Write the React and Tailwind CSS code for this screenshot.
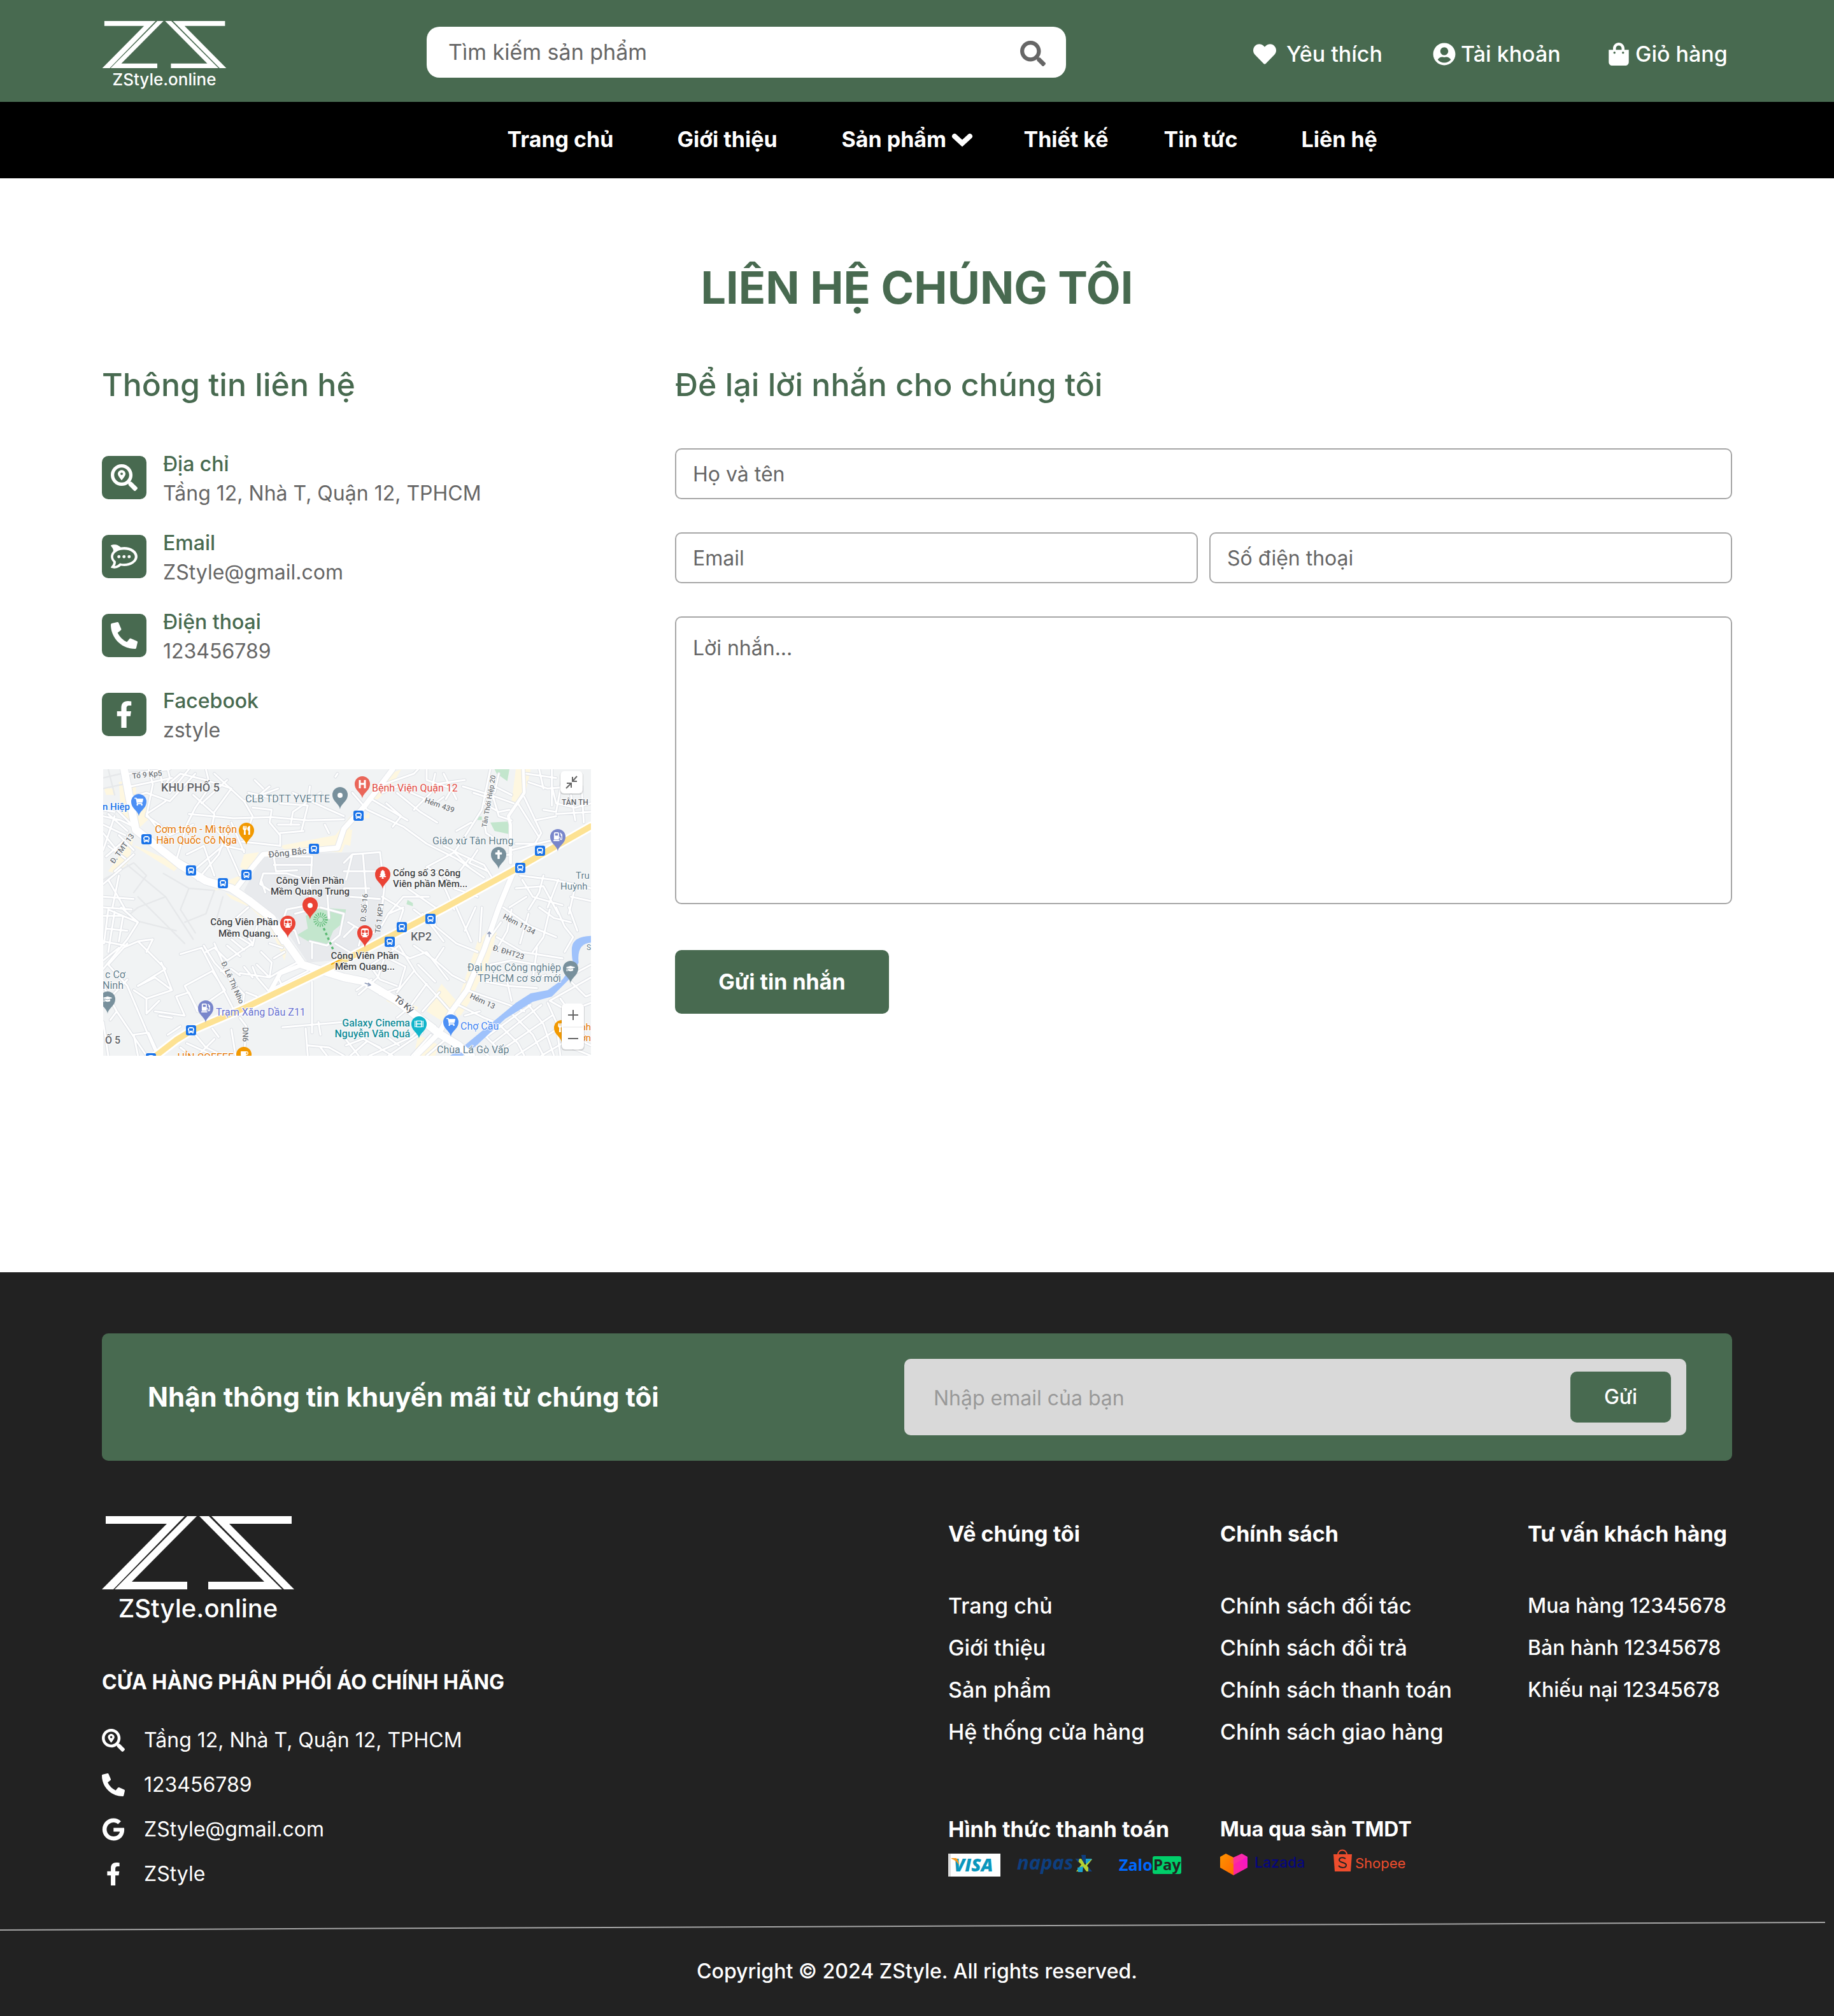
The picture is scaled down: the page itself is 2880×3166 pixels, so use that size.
import React from "react";
import {
  FaSearch,
  FaHeart,
  FaUserCircle,
  FaShoppingBag,
  FaSearchLocation,
  FaRocketchat,
  FaPhoneAlt,
  FaFacebookF,
  FaGoogle,
  FaBus,
  FaSubway,
  FaUtensils,
  FaShoppingCart,
  FaGraduationCap,
  FaGasPump,
  FaTree,
  FaCross,
  FaFilm,
  FaCoffee,
} from "react-icons/fa";

function LogoMark({ className }) {
  return (
    <svg viewBox="0 0 302 115" className={className} fill="white" aria-hidden="true">
      <path d="M6 0H130L18 115H0L102 12H6Z" />
      <path d="M134 0H149L47 103H134V115H20Z" />
      <path d="M153 0H168L283 115H167V103H255Z" />
      <path d="M172 0H298V12H200L302 115H286Z" />
    </svg>
  );
}

/* ---------- Map ---------- */

const BLOCKS = [
  ["#fef7e0", "M36 180L110 100L150 90L165 200L250 220L255 270L190 330L150 290L120 240L110 100Z"],
  ["#fef7e0", "M140 110H190V180H150ZM40 130H90V160H50ZM190 400L400 490L370 520L180 400ZM60 520L180 350L160 470L100 530Z"],
  ["#fef7e0", "M700 440L770 430L720 520L680 500ZM560 590L680 540V600L560 610ZM610 620L800 700V720L640 650ZM870 400L1130 350L1200 260V330L1160 430L900 425Z"],
  ["#fef7e0", "M1390 60L1440 39L1400 110L1330 180L1300 180ZM1170 350L1210 320L1200 400L1160 390ZM1980 39H2050L2030 130L2000 200L1960 190ZM1260 270L1290 240V270Z"],
  ["#fef7e0", "M730 690H780L830 760L900 900L890 940L860 870L820 780ZM1800 850L1860 790L1890 810L1850 950L1760 1140L1720 1200L1690 1180Z"],
  ["#fef7e0", "M1630 1050L1700 1130L1640 1230L1560 1180L1590 1120ZM1380 1100L1520 1160L1500 1200L1370 1130ZM1520 1290L1620 1340L1600 1389H1500ZM1700 1180L1720 1160L1700 1240Z"],
  ["#e8eaed", "M790 445L1340 425L1365 640L1340 850L1180 935L1000 950L860 740L720 650L700 610Z"],
  ["#c3e6cd", "M990 730L1060 690L1180 700L1170 760L1120 800L1090 870L1020 860L950 820L1000 790ZM1880 39H1950L1940 95L1890 60ZM1860 290L1950 285L1950 345L1880 330ZM1800 262H1820V278H1800ZM1470 655L1495 670V685L1465 675Z"],
];

const FAINT = [
  "M36 80L120 60M36 130L130 110M60 39L90 160M150 490L330 640L200 690L140 740L380 800",
  "M320 530L440 600L560 610M330 640L460 840M200 640L420 860M440 600L400 700L470 810",
  "M36 560L180 480L240 540L180 620M560 610L520 720L420 760M600 640L560 780",
];

const LANES = [
  "M160 60L350 39M165 120L360 80M170 170L240 150L350 190L470 60M250 39L270 110L240 260M300 39L320 130L400 60",
  "M340 39L350 80L330 110L350 150L440 39M400 60L520 90L640 130L560 240M520 39L540 120L470 220L430 300L380 470",
  "M620 90L500 200M440 250L650 270L830 265L1000 280L1170 275M240 260L300 300L350 350L460 300M330 190L240 250L300 330",
  "M460 160L560 250L550 300L600 360M560 60L700 190L740 260L700 380M700 190L860 130M750 90L790 130M720 150L860 180",
  "M820 120L760 170M740 220L830 230L820 290L870 350M870 200L1000 210L970 330M1060 150L930 240L920 300M930 150L1080 220L1170 260",
  "M600 360L680 540M610 400L700 420M640 290L700 430M690 380L870 400M620 330L580 440L480 560M430 440L510 400L560 540",
  "M380 460L470 510L600 400M860 300H960M870 340L980 330M870 350V400M1140 60L1130 75M1000 190L1010 120M1080 300L1100 340",
  "M36 260L120 280L180 310M36 300L140 350M60 250L150 330M100 230L190 320M36 340L100 420M90 260L36 420M50 450L130 380",
  "M36 230L90 240M60 400L140 460M110 350L180 420M36 580L120 510M90 520L180 440M36 640L180 650M60 560L140 700M110 540L80 690M36 690L170 700",
  "M1210 150L1280 230L1450 310L1560 390L1700 460L1830 550M1300 180L1470 280M1420 150L1530 240L1610 290M1370 200L1440 260L1400 310",
  "M1330 120L1500 60L1520 39M1350 150L1420 120L1600 200L1640 170M1600 60L1580 150L1500 230M1560 39L1560 90L1680 130L1650 180",
  "M1590 110L1740 90M1640 60L1700 180M1860 39L1820 230L1750 340L1690 430L1760 500M1780 150L1840 170M1770 290L1700 330M1730 120L1860 160L1970 200",
  "M1830 280L1840 340L1900 380L1960 390M1830 200L1900 240L1950 230M1870 160L1900 260L1960 280M1760 460L1700 540M1690 430L1560 500L1680 560",
  "M1640 400L1720 440L1830 490L1880 570M1800 420L1760 480L1850 520M1880 120L1960 160M1900 60L1880 150M2040 100L2130 130L2260 120M2030 60L2170 80",
  "M2090 39L2110 130M2150 39V210M2150 120L2170 200L2260 220L2334 200M2200 80L2170 240L2110 230M2240 160L2260 280M2290 120L2300 290M2170 250L2334 240",
  "M2020 170L2100 340L2070 390L1980 390M2070 280L2170 260M1990 200L2090 360M1960 420L2080 390L2170 370M1870 450L1960 440M2000 540L2160 560L2334 600",
  "M1980 600L2110 590L2180 720M2010 560L2060 640L2200 680M2110 540L2090 620L2040 700M2180 560L2130 690M2260 590L2230 720M2030 640L1950 690M2240 640L2334 660",
  "M1170 480L1210 440L1340 430L1360 600L1350 690M1170 520H1340M1260 440L1280 690M1170 600H1290M1200 640L1340 650M1210 440L1180 560",
  "M840 450H1020L1010 640M840 490H1020M840 450L850 520L950 515M790 530L900 530L1000 560M780 560L800 620M790 530L775 580L820 610M1090 600L1100 740M1000 680L900 700L880 760",
  "M1060 690L1170 720L1150 820L1090 870L1010 850M940 720L1050 690M960 860L940 800L900 780M1190 760L1290 820L1340 790M1130 860L1230 920M1020 860V930",
  "M1350 640L1450 700L1420 790M1470 600L1600 690M1380 720L1450 640L1570 640M1620 540L1690 700M1690 600L1800 640",
  "M60 700L200 760L150 840L36 980M36 730H130L110 850M50 790L150 800M36 850L140 870M60 700L40 860M90 710L60 900M36 940L110 880M120 690L200 760",
  "M36 1060L100 1180L240 1389M150 1030L36 1150M100 1180L70 1220M36 1230L60 1389M150 860L60 960L150 1060L290 1389M130 880L200 850L330 980L200 1060",
  "M200 850L270 840L240 900M310 950L360 1080L240 1120L180 1080M200 1060L280 1020L360 1080M240 1120L240 1190L300 1130M280 1180L420 1200L380 1110L440 1090L480 1180",
  "M400 910L500 880L650 1170M420 1060L550 990L610 1080L480 1170L420 1060M300 1200L360 1210M200 1389L180 1290L250 1280L300 1389M340 1290L400 1250",
  "M510 870L560 950L700 1100L690 1170M520 900L560 880L620 940L740 860L700 810M560 860L600 950M620 870L680 920M640 840L700 890M660 820L740 870L760 780",
  "M720 690L640 760M590 990L640 980L680 1010M680 1000L820 1020L870 990L950 950M700 970L740 1020M740 970L760 1020L820 1090L870 1010M760 960L820 1020L830 950L780 900",
  "M830 780L880 860M820 860L880 880M840 930L890 900M820 1080L1000 990M710 1090L760 1110M860 1020L880 1060M1020 1040V1280M880 1255L1170 1230M1050 1230L1060 1290",
  "M680 1210L710 1250L700 1389M430 1330L560 1389M470 1290L520 1350L600 1389M550 1260L580 1300M640 1265L660 1389M400 1350L450 1389M490 1380L560 1310",
  "M990 1260L1000 1389M1000 1340L1100 1350L1170 1389M1060 1350L1090 1389",
  "M1220 780L1170 830M1260 800L1240 870M1340 790L1380 720L1450 690M1500 700L1590 770L1700 860L1800 900M1610 690L1600 770M1540 720L1640 850M1700 690L1770 850",
  "M1820 690L1810 850M1790 690L1740 800M1380 870L1480 930L1560 900L1660 1030M1360 920L1460 970L1430 1070M1290 960L1340 1030L1420 1060M1270 980L1390 900L1430 870",
  "M1240 1100L1330 1020L1360 930M1230 1080L1300 1030M1430 1070L1340 1100M1430 870L1510 1000L1620 1120L1690 1200M1500 990L1420 1090M1560 1050L1480 1160L1420 1210M1520 960L1600 1040",
  "M1600 940L1680 1010L1740 1040M1500 870L1600 940L1640 880M1620 1090L1540 1180M1750 1080L1950 1150L2020 1180M1710 1150L1830 1210L1880 1230M1740 1200L1810 1180",
  "M1920 690L2050 780L2170 830M1910 760L1860 830M1890 830L2010 900L2200 930M1960 700L1940 800L1900 870M2040 720L2000 860M2090 690L2160 740L2240 760M2140 700L2110 830L2060 900",
  "M2170 690L2210 780L2250 830L2210 900M2230 690L2270 800M1860 960L1960 940L2080 960M1840 1040L1940 1060L2080 1070M1930 1000L1960 1130M2080 880L2060 1030L2120 1010",
  "M2260 1000L2334 960M2240 1040L2310 1110L2334 1100M2334 1020L2140 1130L2230 1180L2334 1140M2130 1140L2170 1230L2190 1389M2040 1150L2110 1240L2160 1389M1960 1190L2060 1290L2110 1389",
  "M1900 1240L1990 1330L2020 1389M1830 1290L1930 1389M2190 1120L2240 1190M2150 1200L1900 1370M2100 1150L1870 1330M2050 1150L1840 1300M2180 1260L1980 1389M2200 1330L2100 1389M1780 1330L1850 1389",
  "M1170 1300L1240 1389M1230 1290L1400 1389M1200 1389L1280 1320L1340 1350M1330 1270L1430 1340M1290 1389L1490 1300L1550 1240M1380 1389L1540 1280M1180 1340L1260 1310",
  "M1640 1320L1560 1389M1580 1290L1490 1389M1600 1250L1560 1220L1510 1190M2250 1300L2334 1340M2240 1350L2334 1389",
];

const MAJOR = [
  [36, "M135 39L165 200L190 325L300 410L400 490L520 565L640 600L720 655L830 740L890 840L975 960L1170 1020L1270 1040L1420 1130L1620 1285L1710 1340L1770 1389"],
  [24, "M1400 39L1270 210L1170 320L1140 410L1060 418L790 440L740 500L660 605"],
  [24, "M1970 520L1900 690L1830 890L1750 1080L1670 1190L1620 1280L1510 1389"],
  [14, "M1955 480V300L1945 260L2020 150L2015 39"],
  [20, "M975 960L870 1000L820 1090"],
];

const HIGHWAY = "M270 1400L380 1315L450 1272L700 1165L1170 940L1640 695L1970 515L2334 308";
const RIVER =
  "M2334 824Q2250 826 2244 880Q2242 930 2252 955L2200 1030L2130 1080L2050 1095L1980 1140L1745 1335L1670 1389H1730L1790 1345L1930 1215L2060 1135L2150 1110L2240 1020L2276 950Q2266 860 2334 856Z";

const ICON_BY_KIND = {
  cart: FaShoppingCart,
  food: FaUtensils,
  school: FaGraduationCap,
  gas: FaGasPump,
  tree: FaTree,
  cross: FaCross,
  film: FaFilm,
  train: FaSubway,
  coffee: FaCoffee,
};

const PINS = [
  [56, 74, "#4d90f5", "cart"],
  [372, 63, "#78909c", "dot"],
  [225, 119, "#f29900", "food"],
  [407, 46, "#ea6659", "hospital"],
  [621, 157, "#78909c", "cross"],
  [714, 129, "#7986cb", "gas"],
  [439, 188, "#ea4335", "tree"],
  [325, 236, "#ea4335", "dot"],
  [290, 265, "#ea4335", "train"],
  [411, 280, "#ea4335", "train"],
  [161, 398, "#7986cb", "gas"],
  [7, 384, "#78909c", "school"],
  [734, 336, "#78909c", "school"],
  [496, 423, "#12b5cb", "film"],
  [546, 420, "#4d90f5", "cart"],
  [720, 429, "#f29900", "food"],
  [221, 471, "#f29900", "coffee"],
];

const BUSES = [
  [68, 110], [138, 159], [188, 179], [225, 166], [331, 125], [401, 73], [686, 128],
  [655, 155], [138, 410], [75, 454], [514, 235], [469, 248], [450, 271],
];

const SLATE = "#5f7d8c";
const DARK = "#3c4043";
const GRAY = "#70757a";
const DISTRICT = "#5f6368";

/* x, baseline, text, colour, size, anchor, rotation */
const LABELS = [
  [46, 15, "Tổ 9 Kp5", GRAY, 12, "start", -6],
  [137, 35, "KHU PHỐ 5", DISTRICT, 18, "middle", 0],
  [42, 64, "n Hiệp", "#1a73e8", 15, "end", 0],
  [356, 52, "CLB TDTT YVETTE", SLATE, 16, "end", 0],
  [210, 100, "Cơm trộn - Mì trộn", "#e37400", 16, "end", 0],
  [210, 117, "Hàn Quốc Cô Nga", "#e37400", 16, "end", 0],
  [17, 149, "Đ. TMT 13", GRAY, 12, "start", -54],
  [260, 139, "Đông Bắc", GRAY, 14, "start", -6],
  [325, 180, "Công Viên Phần", DARK, 15, "middle", 0],
  [325, 197, "Mềm Quang Trung", DARK, 15, "middle", 0],
  [422, 35, "Bệnh Viện Quận 12", "#e0483e", 16, "start", 0],
  [504, 52, "Hẻm 439", GRAY, 12, "start", 20],
  [602, 92, "Tân Thới Hiệp 20", GRAY, 11, "start", -80],
  [517, 118, "Giáo xứ Tân Hưng", SLATE, 16, "start", 0],
  [720, 56, "TÂN TH", DISTRICT, 12, "start", 0],
  [742, 172, "Tru", SLATE, 15, "start", 0],
  [718, 189, "Huỳnh", SLATE, 15, "start", 0],
  [455, 168, "Cổng số 3 Công", DARK, 15, "start", 0],
  [455, 185, "Viên phần Mềm...", DARK, 15, "start", 0],
  [412, 240, "Đ. Số 16", GRAY, 12, "start", -85],
  [435, 258, "Tổ 1 KP1", GRAY, 12, "start", -83],
  [275, 245, "Công Viên Phần", DARK, 15, "end", 0],
  [275, 263, "Mềm Quang...", DARK, 15, "end", 0],
  [411, 298, "Công Viên Phần", DARK, 15, "middle", 0],
  [411, 315, "Mềm Quang...", DARK, 15, "middle", 0],
  [483, 269, "KP2", DISTRICT, 18, "start", 0],
  [185, 304, "Đ. Lê Thị Nho", GRAY, 12, "start", 66],
  [177, 387, "Trạm Xăng Dầu Z11", "#6670cf", 16, "start", 0],
  [35, 328, "c Cơ", SLATE, 16, "end", 0],
  [32, 345, "Ninh", SLATE, 16, "end", 0],
  [3, 431, "Ố 5", DISTRICT, 16, "start", 0],
  [219, 405, "DN6", GRAY, 12, "start", 90],
  [205, 458, "HỈN COFFEE", "#e37400", 16, "end", 0],
  [627, 234, "Hẻm 1134", GRAY, 12, "start", 28],
  [611, 284, "Đ. ĐHT23", GRAY, 12, "start", 17],
  [575, 359, "Hẻm 13", GRAY, 12, "start", 25],
  [456, 362, "Tô Ký", DISTRICT, 14, "start", 38],
  [719, 317, "Đại học Công nghiệp", SLATE, 16, "end", 0],
  [719, 334, "TP.HCM cơ sở mới", SLATE, 16, "end", 0],
  [482, 404, "Galaxy Cinema", "#128c99", 16, "end", 0],
  [482, 421, "Nguyễn Văn Quá", "#128c99", 16, "end", 0],
  [561, 409, "Chợ Cầu", "#3d7ff0", 16, "start", 0],
  [524, 446, "Chùa Lá Gò Vấp", SLATE, 16, "start", 0],
  [766, 284, "S", SLATE, 12, "end", 0],
  [766, 410, "nh", "#e37400", 15, "end", 0],
  [766, 427, "ớn", "#e37400", 15, "end", 0],
];

const HEAVY = new Set([DARK, GRAY, DISTRICT, "#128c99", "#1a73e8"]);

function Pin({ x, y, color, kind }) {
  const Icon = ICON_BY_KIND[kind];
  return (
    <g>
      <path
        d={`M${x} ${y}C${x - 1} ${y - 9} ${x - 12} ${y - 12} ${x - 12} ${y - 23}a12 12 0 0 1 24 0C${x + 12} ${y - 12} ${x + 1} ${y - 9} ${x} ${y}Z`}
        fill={color}
      />
      {kind === "dot" && <circle cx={x} cy={y - 22} r="4" fill="white" />}
      {kind === "hospital" && (
        <path d={`M${x - 4} ${y - 29}v13M${x + 4} ${y - 29}v13M${x - 4} ${y - 23}h8`} stroke="white" strokeWidth="3" />
      )}
      {Icon && <Icon x={x - 7} y={y - 30} size={14} color="white" />}
    </g>
  );
}

function CityMap() {
  return (
    <svg
      viewBox="0 0 766 450"
      className="mt-[38px] ml-0.5 block w-[766px] overflow-hidden font-[Roboto,sans-serif]"
      role="img"
      aria-label="Bản đồ Công Viên Phần Mềm Quang Trung"
    >
      <rect width="766" height="450" fill="#f1f3f4" />
      <g transform="translate(-12 -13) scale(0.33333)" fill="none" strokeLinecap="round" strokeLinejoin="round">
        {BLOCKS.map(([fill, d]) => (
          <path key={d} d={d} fill={fill} />
        ))}
        {FAINT.map((d) => (
          <path key={d} d={d} stroke="#e6e8ea" strokeWidth="7" />
        ))}
        {LANES.map((d) => (
          <path key={d} d={d} stroke="#dcdfe4" strokeWidth="15" />
        ))}
        {MAJOR.map(([w, d]) => (
          <path key={d} d={d} stroke="#e3e5e9" strokeWidth={w + 6} />
        ))}
        {LANES.map((d) => (
          <path key={d} d={d} stroke="white" strokeWidth="9" />
        ))}
        <path d={RIVER} fill="#9fc2fb" />
        {MAJOR.map(([w, d]) => (
          <path key={d} d={d} stroke="white" strokeWidth={w} />
        ))}
        <path d={HIGHWAY} stroke="white" strokeWidth="44" />
        <path d={HIGHWAY} stroke="#fde293" strokeWidth="28" />
        <path d="M1112 958L1175 925" stroke="#f9ab00" strokeWidth="5" />
        <circle cx="1060" cy="748" r="26" stroke="#5bb974" strokeWidth="16" strokeDasharray="4 6" strokeLinecap="butt" />
        <circle cx="1060" cy="748" r="14" stroke="#5bb974" strokeWidth="3" />
        <path d="M1075 788L1120 890" stroke="#5bb974" strokeWidth="10" strokeDasharray="12 12" strokeLinecap="butt" />
        <path d="M1270 1047l24 8m-8-8l10 9l-12 4M1855 828v-22m-7 8l7-8l7 8" stroke="#8f9bb8" strokeWidth="5" />
      </g>
      {BUSES.map(([x, y]) => (
        <g key={`${x}-${y}`}>
          <rect x={x - 8} y={y - 8} width="16" height="16" rx="3" fill="#1a73e8" />
          <FaBus x={x - 5} y={y - 5} size={10} color="white" />
        </g>
      ))}
      {PINS.map(([x, y, color, kind]) => (
        <Pin key={`${x}-${y}`} x={x} y={y} color={color} kind={kind} />
      ))}
      {LABELS.map(([x, y, text, fill, size, anchor, angle]) => (
        <text
          key={`${x}-${y}`}
          x={x}
          y={y}
          fill={fill}
          fontSize={size}
          fontWeight={HEAVY.has(fill) ? 500 : 400}
          textAnchor={anchor}
          transform={`rotate(${angle} ${x} ${y})`}
          stroke="white"
          strokeWidth="2"
          strokeLinejoin="round"
          paintOrder="stroke"
        >
          {text}
        </text>
      ))}
      <g>
        <rect x="717" y="4" width="37" height="36" rx="6" fill="#00000022" />
        <rect x="718" y="3" width="35" height="35" rx="6" fill="white" />
        <path d="M744 11L737 19M737 12v7h7M727 30l8-8M728 22h7v7" stroke="#666" strokeWidth="2" fill="none" />
        <rect x="719" y="369" width="37" height="73" rx="6" fill="#00000022" />
        <rect x="720" y="368" width="35" height="72" rx="6" fill="white" />
        <path d="M722 405h31" stroke="#e6e6e6" />
        <path d="M730 386h16M738 378v16M730 423h16" stroke="#666" strokeWidth="2" />
      </g>
    </svg>
  );
}

/* ---------- Header ---------- */

const ACTIONS = [
  { icon: FaHeart, label: "Yêu thích", gap: "gap-4" },
  { icon: FaUserCircle, label: "Tài khoản", gap: "gap-2" },
  { icon: FaShoppingBag, label: "Giỏ hàng", gap: "gap-2" },
];

function Header() {
  return (
    <header>
      <div className="flex h-40 items-center justify-between bg-[#486a50] px-40 pt-1">
        <a href="#home" className="flex w-[216px] flex-col items-start pt-3 text-white">
          <LogoMark className="w-[196px]" />
          <span className="w-[196px] text-center text-[26px] leading-9 font-medium">ZStyle.online</span>
        </a>
        <form className="flex h-20 w-full max-w-[1004px] items-center rounded-[20px] bg-white pr-8 pl-[34px]">
          <input
            type="search"
            aria-label="Tìm kiếm sản phẩm"
            placeholder="Tìm kiếm sản phẩm"
            className="min-w-0 flex-1 bg-transparent text-[34px] outline-none placeholder:text-[#666]"
          />
          <button type="button" aria-label="Tìm kiếm" className="pt-1 text-[#666]">
            <FaSearch size={40} />
          </button>
        </form>
        <div className="grid w-[752px] grid-cols-[282px_274px_1fr] pt-1.5 text-[34px] font-medium whitespace-nowrap text-white">
          {ACTIONS.map(({ icon: Icon, label, gap }) => (
            <a key={label} href="#account" className={`flex items-center ${gap}`}>
              <Icon size={36} />
              {label}
            </a>
          ))}
        </div>
      </div>
      <nav className="grid h-[120px] grid-cols-[267px_258px_286px_220px_216px_114px] items-center justify-center bg-black pb-0.5 pl-[74px] text-[34px] font-bold whitespace-nowrap text-white">
        <a href="#home">Trang chủ</a>
        <a href="#about">Giới thiệu</a>
        <button type="button" className="flex items-center gap-2 text-left">
          Sản phẩm
          <svg width="34" height="24" viewBox="0 0 34 24" aria-hidden="true">
            <path d="M5 7L17 18L29 7" fill="none" stroke="white" strokeWidth="8" strokeLinecap="round" />
          </svg>
        </button>
        <a href="#design">Thiết kế</a>
        <a href="#news">Tin tức</a>
        <a href="#contact">Liên hệ</a>
      </nav>
    </header>
  );
}

/* ---------- Contact ---------- */

const CONTACTS = [
  { icon: FaSearchLocation, label: "Địa chỉ", value: "Tầng 12, Nhà T, Quận 12, TPHCM" },
  { icon: FaRocketchat, label: "Email", value: "ZStyle@gmail.com" },
  { icon: FaPhoneAlt, label: "Điện thoại", value: "123456789" },
  { icon: FaFacebookF, label: "Facebook", value: "zstyle" },
];

const FIELD =
  "w-full rounded-[10px] border-2 border-[#a6a6a6] bg-white px-[26px] text-[#666] outline-none placeholder:text-[#666]";

function Contact() {
  return (
    <main className="px-40 pt-[118px] pb-[340px]">
      <h1 className="text-center text-[70px] leading-[108px] font-bold text-[#486a50]">LIÊN HỆ CHÚNG TÔI</h1>
      <div className="mt-[62px] grid grid-cols-[900px_1fr]">
        <section>
          <h2 className="text-[50px] leading-[72px] font-medium text-[#486a50]">Thông tin liên hệ</h2>
          <ul className="mt-[66px] flex flex-col gap-8">
            {CONTACTS.map(({ icon: Icon, label, value }) => (
              <li key={label} className="flex items-start gap-[26px]">
                <span className="mt-2.5 flex h-[68px] w-[70px] items-center justify-center rounded-[10px] bg-[#486a50] text-white">
                  <Icon size={42} />
                </span>
                <span className="leading-[46px]">
                  <span className="block font-medium text-[#486a50]">{label}</span>
                  <span className="block text-[#666]">{value}</span>
                </span>
              </li>
            ))}
          </ul>
          <CityMap />
        </section>
        <section>
          <h2 className="text-[50px] leading-[72px] font-medium text-[#486a50]">Để lại lời nhắn cho chúng tôi</h2>
          <form className="mt-16 flex flex-col gap-[52px]">
            <input type="text" aria-label="Họ và tên" placeholder="Họ và tên" className={`h-20 ${FIELD}`} />
            <div className="grid grid-cols-2 gap-[18px]">
              <input type="email" aria-label="Email" placeholder="Email" className={`h-20 ${FIELD}`} />
              <input type="tel" aria-label="Số điện thoại" placeholder="Số điện thoại" className={`h-20 ${FIELD}`} />
            </div>
            <textarea
              aria-label="Lời nhắn"
              placeholder="Lời nhắn..."
              className={`h-[452px] resize-none pt-6 leading-[48px] ${FIELD}`}
            />
            <button
              type="button"
              className="mt-5 h-[100px] w-[336px] rounded-[10px] bg-[#486a50] text-[34px] font-bold text-white"
            >
              Gửi tin nhắn
            </button>
          </form>
        </section>
      </div>
    </main>
  );
}

/* ---------- Footer ---------- */

const COLUMNS = [
  { title: "Về chúng tôi", size: "text-[34px]", links: ["Trang chủ", "Giới thiệu", "Sản phẩm", "Hệ thống cửa hàng"] },
  {
    title: "Chính sách",
    size: "text-[34px]",
    links: ["Chính sách đối tác", "Chính sách đổi trả", "Chính sách thanh toán", "Chính sách giao hàng"],
  },
  {
    title: "Tư vấn khách hàng",
    size: "text-[32px]",
    links: ["Mua hàng 12345678", "Bản hành 12345678", "Khiếu nại 12345678"],
  },
];

const STORE = [
  { icon: FaSearchLocation, text: "Tầng 12, Nhà T, Quận 12, TPHCM" },
  { icon: FaPhoneAlt, text: "123456789" },
  { icon: FaGoogle, text: "ZStyle@gmail.com" },
  { icon: FaFacebookF, text: "ZStyle" },
];

function Visa() {
  return (
    <svg width="82" height="36" viewBox="0 0 82 36" className="overflow-visible" role="img" aria-label="Visa">
      <rect width="82" height="36" fill="white" />
      <rect width="4" height="36" fill="#dcdcdc" />
      <text x="9" y="28" fontSize="28" fontWeight="800" fontStyle="italic" fill="#0a97bd" fontFamily="Open Sans, sans-serif">
        VISA
      </text>
      <path d="M5 7H12Q16 8 17 18Q12 10 5 8Z" fill="#f7981d" />
    </svg>
  );
}

function Napas() {
  return (
    <svg width="120" height="36" viewBox="0 0 120 36" className="overflow-visible" role="img" aria-label="Napas">
      <text x="0" y="25" fontSize="31" fontWeight="700" fontStyle="italic" fill="#0e3f80" fontFamily="Open Sans, sans-serif">
        napas
      </text>
      <path d="M101 2H108V14L104 16Z" fill="#0e3f80" />
      <path d="M92 8H101L107 18L114 9H118L110 19L117 28H109L104 21L98 28H93L101 17Z" fill="#b5d334" />
      <path d="M108 8H118L108 17ZM95 22L104 20L103 29H96Z" fill="#19a3d1" />
      <path d="M92 8H98L96 14ZM112 21L118 28H112Z" fill="#0e3f80" />
    </svg>
  );
}

function ZaloPay() {
  return (
    <svg width="98" height="36" viewBox="0 0 98 36" className="overflow-visible" role="img" aria-label="ZaloPay">
      <rect x="53" y="4" width="45" height="28" rx="3" fill="#00cf6a" />
      <text x="0" y="27" fontSize="25" fontWeight="700" fill="#0068ff" fontFamily="Open Sans, sans-serif">
        Zalo
      </text>
      <text x="54" y="26" fontSize="24" fontWeight="700" fill="#222222" fontFamily="Open Sans, sans-serif">
        Pay
      </text>
    </svg>
  );
}

function Lazada() {
  return (
    <svg width="140" height="44" viewBox="0 0 140 44" role="img" aria-label="Lazada">
      <defs>
        <linearGradient id="lz-left" x1="0" y1="0" x2="1" y2="1">
          <stop offset="0" stopColor="#ff9300" />
          <stop offset="1" stopColor="#ff6a00" />
        </linearGradient>
        <linearGradient id="lz-right" x1="1" y1="0" x2="0" y2="1">
          <stop offset="0" stopColor="#f40fd5" />
          <stop offset="1" stopColor="#ff2a8f" />
        </linearGradient>
      </defs>
      <path d="M0 13L9 8L21 14V42L0 30Z" fill="url(#lz-left)" />
      <path d="M43 13L34 8L21 14V42L43 30Z" fill="url(#lz-right)" />
      <path d="M21 14L34 8L43 13L21 25L15 21Z" fill="#ff4f7d" fillOpacity="0.35" />
      <text x="54" y="30" fontSize="23" fontWeight="500" fill="#06067d" fontFamily="Inter, sans-serif">
        Lazada
      </text>
    </svg>
  );
}

function Shopee() {
  return (
    <svg width="116" height="44" viewBox="0 0 116 44" role="img" aria-label="Shopee">
      <path d="M0 9H29L27 36H2Z" fill="#ee4d2d" />
      <path d="M7 10C7 0 21 0 21 10" stroke="#ee4d2d" strokeWidth="2" fill="none" />
      <path d="M19 16C15 13 9 14 9 18C9 23 20 21 20 26C20 31 12 31 8 27" stroke="#222222" strokeWidth="2" fill="none" />
      <text x="34" y="31" fontSize="22" fill="#ee4d2d" fontFamily="Inter, sans-serif">
        Shopee
      </text>
    </svg>
  );
}

function Footer() {
  return (
    <footer className="bg-[#222222] pt-24 text-white">
      <div className="px-40">
        <div className="flex h-[200px] items-center justify-between rounded-[10px] bg-[#486a50] px-[72px]">
          <h2 className="text-[42px] leading-[64px] font-bold">Nhận thông tin khuyến mãi từ chúng tôi</h2>
          <form className="flex h-[120px] w-[1228px] items-center rounded-[10px] bg-[#d9d9d9] pr-6 pl-[46px]">
            <input
              type="email"
              aria-label="Nhập email của bạn"
              placeholder="Nhập email của bạn"
              className="min-w-0 flex-1 bg-transparent pt-1 text-[#666] outline-none placeholder:text-[#999]"
            />
            <button type="button" className="h-20 w-[158px] rounded-[10px] bg-[#486a50] font-medium text-white">
              Gửi
            </button>
          </form>
        </div>
        <div className="mt-[87px] grid grid-cols-[1fr_1231px]">
          <section>
            <LogoMark className="block w-[302px]" />
            <p className="mt-1.5 w-[302px] text-center text-[40px] leading-[48px] font-medium">ZStyle.online</p>
            <h3 className="mt-[68px] leading-[48px] font-bold">CỬA HÀNG PHÂN PHỐI ÁO CHÍNH HÃNG</h3>
            <ul className="mt-8 leading-[70px]">
              {STORE.map(({ icon: Icon, text }) => (
                <li key={text} className="flex items-center gap-[30px]">
                  <Icon size={36} />
                  {text}
                </li>
              ))}
            </ul>
          </section>
          <div className="grid grid-cols-[427px_483px_1fr] content-start pt-1 whitespace-nowrap">
            {COLUMNS.map(({ title, size, links }) => (
              <section key={title}>
                <h3 className="text-[34px] leading-[48px] font-bold">{title}</h3>
                <ul className={`mt-14 font-medium ${size}`}>
                  {links.map((link) => (
                    <li key={link} className="leading-[66px]">
                      <a href="#info">{link}</a>
                    </li>
                  ))}
                </ul>
              </section>
            ))}
            <section className="mt-24">
              <h3 className="text-[34px] leading-[48px] font-bold">Hình thức thanh toán</h3>
              <div className="mt-[14px] flex">
                <Visa />
                <span className="ml-[26px]">
                  <Napas />
                </span>
                <span className="ml-10">
                  <ZaloPay />
                </span>
              </div>
            </section>
            <section className="mt-24">
              <h3 className="text-[32px] leading-[48px] font-bold">Mua qua sàn TMDT</h3>
              <div className="mt-1.5 flex gap-[38px]">
                <Lazada />
                <Shopee />
              </div>
            </section>
          </div>
        </div>
      </div>
      <svg viewBox="0 0 2880 14" className="mt-10 block w-full" aria-hidden="true">
        <path d="M0 13L2866 1" stroke="#a6a6a6" strokeWidth="2" />
      </svg>
      <p className="mt-10 pb-12 text-center leading-[48px] font-medium">
        Copyright © 2024 ZStyle. All rights reserved.
      </p>
    </footer>
  );
}

export default function App() {
  return (
    <div className="min-h-screen bg-white font-[Inter,sans-serif] text-[32px] leading-[48px]">
      <Header />
      <Contact />
      <Footer />
    </div>
  );
}
